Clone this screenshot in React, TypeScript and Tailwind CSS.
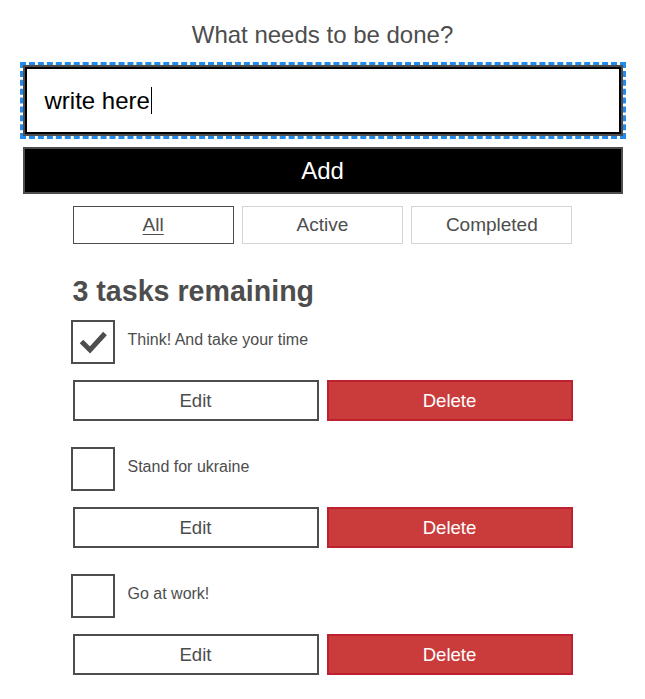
import React from "react";

const tasks = [
  { name: "Think! And take your time", done: true },
  { name: "Stand for ukraine", done: false },
  { name: "Go at work!", done: false },
];

function Check({ done }: { done: boolean }) {
  return (
    <div className="-ml-[2px] w-[44px] h-[44px] shrink-0 border-2 border-[#4d4d4d] bg-white">
      {done && (
        <svg width="40" height="40" viewBox="0 0 40 40" className="block">
          <polyline
            points="8.5,19.5 17,28 32,11.5"
            fill="none"
            stroke="#4d4d4d"
            strokeWidth="5"
            strokeLinejoin="miter"
          />
        </svg>
      )}
    </div>
  );
}

export default function App() {
  return (
    <div className="min-h-[699px] bg-white flex flex-col items-center pt-[21px] font-['Liberation_Sans',Arial,sans-serif] text-[#4d4d4d]">
      <h1 className="text-[24px] leading-[28px] font-normal">What needs to be done?</h1>
      <div
        role="textbox"
        className="mt-[16px] w-[600px] h-[71px] border-2 border-[#4d4d4d] shadow-[inset_0_0_0_2px_#000] outline-dashed outline-[3px] outline-[#228bec] flex items-center pl-[20px] text-[24px] text-black bg-white"
      >
        <span>write here</span>
        <span className="ml-[1px] w-px h-[27px] bg-black" />
      </div>
      <button className="mt-[11px] w-[600px] h-[47px] bg-black border-2 border-[#4d4d4d] text-white text-[24px] leading-none">
        Add
      </button>
      <div className="mt-[12px] w-[500px] grid grid-cols-3 gap-[8px]">
        <button className="h-[38px] pt-[1px] border border-[#4d4d4d] text-[19px] underline underline-offset-[3px] bg-white">
          All
        </button>
        <button className="h-[38px] pt-[1px] border border-[#d4d4d4] text-[19px] bg-white">Active</button>
        <button className="h-[38px] pt-[1px] border border-[#d4d4d4] text-[19px] bg-white">Completed</button>
      </div>
      <div className="w-[500px] mt-[30px]">
        <h2 className="text-[28.6px] leading-[34px] font-bold">3 tasks remaining</h2>
        <ul className="mt-[12px] flex flex-col gap-[26px]">
          {tasks.map((t) => (
            <li key={t.name} className="flex flex-col">
              <div className="flex items-start">
                <Check done={t.done} />
                <span className="ml-[13px] mt-[11px] text-[16px] leading-[18px]">{t.name}</span>
              </div>
              <div className="mt-[16px] grid grid-cols-2 gap-[8px]">
                <button className="h-[41px] border-2 border-[#4d4d4d] bg-white text-[18.6px]">Edit</button>
                <button className="h-[41px] border-2 border-[#bd2130] bg-[#ca3c3c] text-white text-[18.6px]">
                  Delete
                </button>
              </div>
            </li>
          ))}
        </ul>
      </div>
    </div>
  );
}
